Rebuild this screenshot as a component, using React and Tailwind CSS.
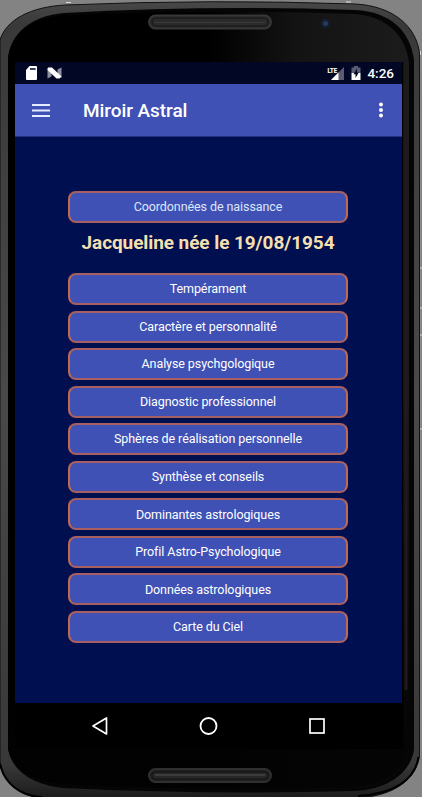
const SECTIONS = [
  'Tempérament',
  'Caractère et personnalité',
  'Analyse psychgologique',
  'Diagnostic professionnel',
  'Sphères de réalisation personnelle',
  'Synthèse et conseils',
  'Dominantes astrologiques',
  'Profil Astro-Psychologique',
  'Données astrologiques',
  'Carte du Ciel',
]

/** Phone shell: metal rim, glass, speakers and front camera. */
function PhoneFrame() {
  return (
    <svg className="col-start-1 row-start-1" width="422" height="797" viewBox="0 0 422 797" fill="none">
      <defs>
        <linearGradient id="rim" x1="0" y1="0" x2="0" y2="797" gradientUnits="userSpaceOnUse">
          <stop offset="0" stopColor="#494949" />
          <stop offset="0.03" stopColor="#393939" />
          <stop offset="0.5" stopColor="#494949" />
          <stop offset="0.96" stopColor="#383838" />
          <stop offset="1" stopColor="#1c1c1c" />
        </linearGradient>
        <linearGradient id="glass" x1="210" y1="0" x2="400" y2="0" gradientUnits="userSpaceOnUse">
          <stop offset="0" stopColor="#000" />
          <stop offset="0.45" stopColor="#131313" />
          <stop offset="1" stopColor="#1b1b1b" />
        </linearGradient>
        <linearGradient id="fade" x1="0" y1="0" x2="0" y2="797" gradientUnits="userSpaceOnUse">
          <stop offset="0.5" stopColor="#000" stopOpacity="0" />
          <stop offset="0.93" stopColor="#020203" stopOpacity="0.9" />
        </linearGradient>
      </defs>
      <rect width="422" height="797" fill="#838383" />
      <path
        d="M0 40C6 20 30 7 65 5Q211 -1 355 4C393 6 416 26 419.500 53V756C416 780 393 796 358 798H42C18 796 3 782 0 761Z"
        fill="url(#rim)"
        stroke="#111"
      />
      <path d="M420.500 54V756" stroke="#8c8c8c" />
      <path d="M0 764C4 783 20 796 42 797M358 796C394 794 415 780 418.500 757" stroke="#000" strokeWidth="2" />
      <path
        d="M8 58C11 33 31 16 64 13Q211 5 355 10C391 12 410 31 414 60V750C410 772 390 789 355 791Q211 795 62 788C31 784 11 770 8 748Z"
        fill="#050505"
      />
      <path
        d="M8 58C11 33 31 18 64 15Q211 9 355 14C384 16 405 33 409 62V750C405 771 384 786 355 788Q211 791 62 784C31 781 11 768 8 748Z"
        fill="url(#glass)"
      />
      <path
        d="M8 58C11 33 31 18 64 15Q211 9 355 14C384 16 405 33 409 62V750C405 771 384 786 355 788Q211 791 62 784C31 781 11 768 8 748Z"
        fill="url(#fade)"
      />
      <path d="M402.500 62V749" stroke="#000" strokeWidth="1.500" />
      <path d="M406 85V690" stroke="#1e1a1f" strokeWidth="3" />
      <rect x="149" y="15.500" width="122" height="13" rx="6.500" fill="#282828" stroke="#373737" strokeWidth="2" />
      <rect x="152" y="18" width="116" height="8" rx="4" fill="#2b2b2b" stroke="#171717" />
      <path d="M155 22.500H265" stroke="#3a3a3a" />
      <rect x="149" y="769" width="122" height="13" rx="6.500" fill="#202020" stroke="#303030" strokeWidth="2" />
      <rect x="152" y="772" width="116" height="7" rx="3.500" fill="#272727" stroke="#121212" />
      <path d="M155 775H265" stroke="#454545" strokeWidth="1.500" />
      <circle cx="325.500" cy="23.500" r="5" fill="#151c2a" />
      <circle cx="325.500" cy="23.500" r="2.500" fill="#253a63" />
      <path d="M66 2.500H71M346 2H351M420.500 51V55M421 267V269M421 307V309M421 334V336M421 428V430" stroke="#ddd" />
    </svg>
  )
}

function StatusBar() {
  return (
    <div className="flex h-[22px] items-center bg-[#030726] pl-[11px] pr-2 text-white">
      <svg width="11" height="14" viewBox="0 0 11 14">
        <path d="M3.500 0H10Q11 0 11 1V13Q11 14 10 14H1Q0 14 0 13V4Z" fill="#fff" />
        <path d="M4 2H9.600V4H4Z" fill="#3a3d55" />
      </svg>
      <svg className="ml-[10px]" width="15" height="12" viewBox="0 0 15 12">
        <path d="M0.500 1L4.500 3V9.500L0.500 11.500ZM10.500 2.500L14.500 0.500V11L10.500 8Z" fill="#8d8fa0" />
        <path d="M1 0.500H5L14.500 9.500L12.500 11.500H9.500L0.500 3Z" fill="#fff" />
      </svg>
      <svg className="ml-auto" width="18" height="15" viewBox="0 0 18 15">
        <path d="M17 1V14H4Z" fill="#5a5c73" />
        <path d="M11.500 6.500V14H4Z" fill="#fff" />
        <text x="0.500" y="6.500" fill="#fff" stroke="#fff" strokeWidth="0.200" fontFamily="Roboto, sans-serif" fontSize="8" fontWeight="700" textLength="9.500" lengthAdjust="spacingAndGlyphs">
          LTE
        </text>
      </svg>
      <svg className="ml-1.5" width="10" height="14" viewBox="0 0 10 14">
        <path d="M3 0H7V1.500H9.500V7H0.500V1.500H3Z" fill="#5a5c73" />
        <path d="M0.500 7H9.500V14H0.500Z" fill="#fff" />
        <path d="M6 2.500L2.500 8.300H4.500V12L7.800 6.500H6Z" fill="#030726" />
      </svg>
      <span className="ml-1.5 pt-px text-[13.5px] font-medium leading-none">4:26</span>
    </div>
  )
}

function AppBar() {
  return (
    <header className="flex h-[53px] items-center border-b border-[#26317d] bg-[#3f51b5] pl-[17px] pr-[19px] text-white">
      <svg width="18" height="13" viewBox="0 0 18 13" stroke="#e6ecff" strokeWidth="1.800">
        <path d="M0 1H18M0 6.500H18M0 12H18" />
      </svg>
      <h1 className="ml-[33px] pt-[3px] text-[19px] font-medium tracking-[-0.06px]">Miroir Astral</h1>
      <svg className="ml-auto" width="4" height="16" viewBox="0 0 4 16" fill="currentColor">
        <circle cx="2" cy="2.500" r="2" />
        <circle cx="2" cy="8" r="2" />
        <circle cx="2" cy="13.500" r="2" />
      </svg>
    </header>
  )
}

function MenuButton({ children, muted }) {
  return (
    <button
      className={`block h-8 w-[280px] rounded-[8px] border-2 border-x-[#c0694f] border-y-[#a85f60] bg-[#3f51b5] pt-px text-[12.5px] leading-none tracking-[-0.08px] ${
        muted ? 'text-[#dce6fb]' : 'text-white'
      }`}
    >
      {children}
    </button>
  )
}

function NavBar() {
  return (
    <nav className="flex h-[46px] items-center justify-between bg-black pl-[76px] pr-[76px]">
      <svg width="18" height="20" viewBox="0 0 18 20" fill="none" stroke="#fff" strokeWidth="1.700">
        <path d="M15.500 2V18L2 10Z" strokeLinejoin="round" />
      </svg>
      <svg width="20" height="20" viewBox="0 0 20 20" fill="none" stroke="#fff" strokeWidth="1.800">
        <circle cx="9.500" cy="10" r="8" />
      </svg>
      <svg width="18" height="18" viewBox="0 0 18 18" fill="none" stroke="#fff" strokeWidth="1.700">
        <rect x="2" y="2" width="14" height="14" />
      </svg>
    </nav>
  )
}

export default function App() {
  return (
    <div className="grid h-[797px] w-[422px] overflow-hidden font-['Roboto',sans-serif]">
      <PhoneFrame />
      <div className="z-10 col-start-1 row-start-1 ml-[15px] mt-[62px] w-[387px]">
        <StatusBar />
        <AppBar />
        <main className="flex h-[566px] flex-col items-center bg-[#000f50] pr-px pt-[54px]">
          <MenuButton muted>Coordonnées de naissance</MenuButton>
          <h2 className="flex h-[50px] items-start pt-[6px] text-[19px] font-bold tracking-[-0.08px] text-[#f5dfae]">
            Jacqueline née le 19/08/1954
          </h2>
          <div className="flex flex-col gap-[5.55px]">
            {SECTIONS.map((s) => (
              <MenuButton key={s}>{s}</MenuButton>
            ))}
          </div>
        </main>
        <NavBar />
      </div>
    </div>
  )
}
